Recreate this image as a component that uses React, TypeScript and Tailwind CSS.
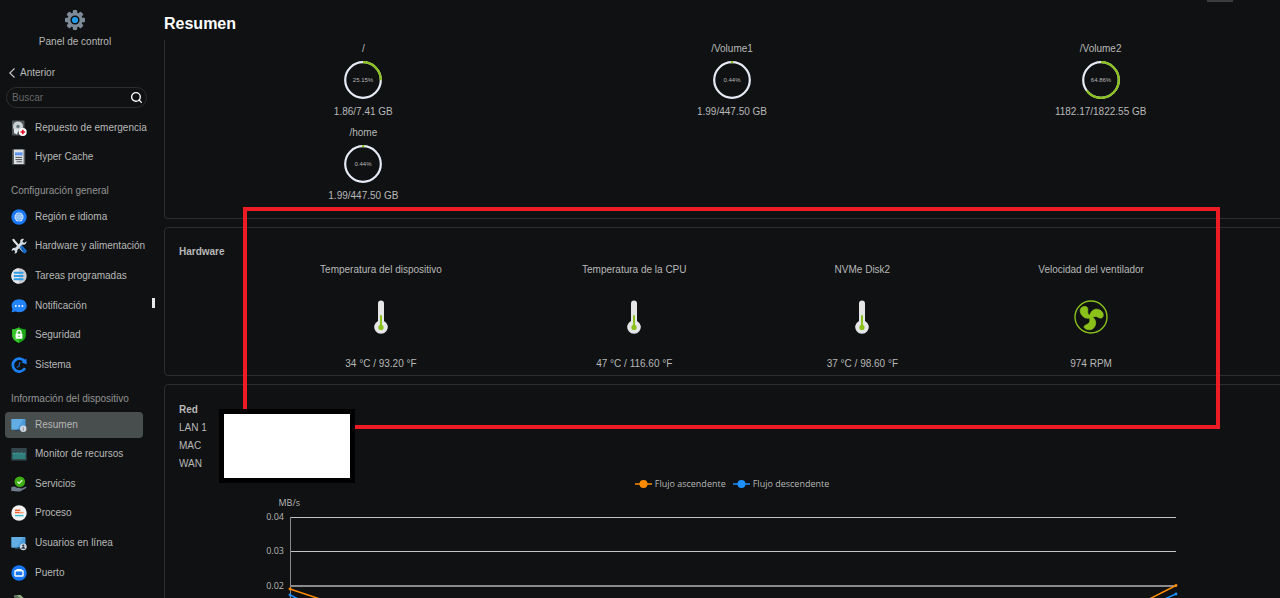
import { useState } from 'react';
import type { ReactNode } from 'react';
import { Search } from 'lucide-react';

type Item = { id: string; label?: string; icon: ReactNode };

function Icon({ children }: { children: ReactNode }) {
  return (
    <svg viewBox="0 0 16 16" className="h-4 w-4 shrink-0" aria-hidden="true">
      {children}
    </svg>
  );
}

// monitor shared by "Resumen" and "Usuarios en línea"
function Screen() {
  return (
    <>
      <rect x="0.5" y="2" width="14" height="10.4" rx="0.6" fill="#4a9bd9" />
      <path d="M0.5 2h12L6 12.4H0.5z" fill="#62aee4" />
      <path d="M4 13.6h5" stroke="#29445c" strokeWidth="1" />
    </>
  );
}

const TOP_ITEMS: Item[] = [
  {
    id: 'spare',
    label: 'Repuesto de emergencia',
    icon: (
      <Icon>
        <rect x="1" y="0.5" width="12.5" height="15" rx="1" fill="#55585b" />
        <circle cx="7" cy="6.4" r="5" fill="#c9d3d6" />
        <circle cx="7" cy="6.4" r="1.7" fill="#5d7378" />
        <path d="M3 8.5l4.5 1.5L6 14.5 3 13z" fill="#e3e8ea" />
        <circle cx="11.8" cy="12" r="3.9" fill="#fff" />
        <path d="M11.8 9.7v4.6M9.5 12h4.6" stroke="#e01228" strokeWidth="1.7" />
      </Icon>
    ),
  },
  {
    id: 'cache',
    label: 'Hyper Cache',
    icon: (
      <Icon>
        <rect x="1.2" y="0.2" width="13" height="15.6" rx="0.8" fill="#5b5e60" />
        <rect x="3" y="0.6" width="9.6" height="14.4" fill="#dfe3e6" />
        <rect x="4" y="3.4" width="7.6" height="3" fill="#5b93ee" />
        <path d="M4.5 8.4h6.6M4.5 10.6h6.6M5.5 12.8h5.6" stroke="#4b4f54" strokeWidth="1" />
      </Icon>
    ),
  },
];

const GENERAL_ITEMS: Item[] = [
  {
    id: 'region',
    label: 'Región e idioma',
    icon: (
      <Icon>
        <circle cx="8" cy="8" r="7.7" fill="#1a78fa" />
        <circle cx="8" cy="8" r="4.5" fill="#e8f2ff" />
        <path
          d="M3.5 8h9M4.2 5.8h7.6M4.2 10.2h7.6M8 3.5v9M8 3.5c-3 2.8-3 6.2 0 9M8 3.5c3 2.8 3 6.2 0 9"
          fill="none"
          stroke="#3d8dfb"
          strokeWidth="0.6"
        />
      </Icon>
    ),
  },
  {
    id: 'hardware',
    label: 'Hardware y alimentación',
    icon: (
      <Icon>
        <path d="M1 1.5l2-.8 1.2 1.8L13 12.500 11.5 14 2.6 4z" fill="#dfe5e9" />
        <path
          d="M15.4 3.2l-2.3 1.7-1.7-1.5L13 .9c-2.4-.7-4.5 1.2-3.7 3.500L4 9.900c-1.8-.6-3.700 1-3.300 3l2-.9 1.500 1.300-.7 2.200c2 .2 3.300-1.500 2.700-3.300l5.300-5.700c2.300.8 4.400-1 3.900-3.300z"
          fill="#d3dce2"
        />
        <path d="M8.6 9.2l2.2-2 4.7 5c.9 1.800-1.200 3.800-2.900 2.700z" fill="#1c6fd0" />
        <path d="M10.800 10l3 3.400" stroke="#0b3f86" strokeWidth="0.8" />
      </Icon>
    ),
  },
  {
    id: 'tasks',
    label: 'Tareas programadas',
    icon: (
      <Icon>
        <circle cx="8" cy="8" r="7.7" fill="#c8ccd2" />
        <path d="M8 .3a7.7 7.7 0 0 0 0 15.4z" fill="#e5e7ea" />
        <path d="M3.6 4.7h8M3.600 8h8M3.600 11.3h8" stroke="#2d9ae6" strokeWidth="2" strokeLinecap="round" />
      </Icon>
    ),
  },
  {
    id: 'notification',
    label: 'Notificación',
    icon: (
      <Icon>
        <path
          d="M8.2 1.300c4.200 0 7.500 2.800 7.500 6.400s-3.300 6.500-7.500 6.500c-1.300 0-2.500-.2-3.500-.7L.5 14.300l1-3C.9 10.200.6 9 .6 7.700c0-3.600 3.300-6.400 7.600-6.400z"
          fill="#2283fb"
        />
        <circle cx="4.8" cy="8" r="0.9" fill="#fff" />
        <circle cx="8.1" cy="8" r="0.9" fill="#fff" />
        <circle cx="11.4" cy="8" r="0.9" fill="#fff" />
      </Icon>
    ),
  },
  {
    id: 'security',
    label: 'Seguridad',
    icon: (
      <Icon>
        <path d="M8 .2c2 1.500 4.200 2.100 6.800 2.100v6c0 3.800-3 6-6.800 7.600C4.200 14.300 1.200 12.100 1.200 8.300v-6C3.800 2.300 6 1.700 8 .2z" fill="#19a516" />
        <path d="M8 .2v15.700C4.200 14.300 1.200 12.100 1.200 8.300v-6C3.800 2.300 6 1.700 8 .2z" fill="#38c42b" />
        <rect x="4.6" y="6.8" width="6.8" height="5" rx="0.5" fill="#fff" />
        <path d="M6 7V5.5a2 2 0 0 1 4 0V7" fill="none" stroke="#fff" strokeWidth="1.3" />
        <circle cx="8" cy="9.2" r="0.7" fill="#23a51d" />
      </Icon>
    ),
  },
  {
    id: 'system',
    label: 'Sistema',
    icon: (
      <Icon>
        <path d="M14 5A6.5 6.5 0 1 0 14 11.2" fill="none" stroke="#1c80f5" strokeWidth="2.7" />
        <path d="M15.4 1.600l.3 5.600-5.200-1.700z" fill="#1c80f5" />
        <path d="M8.8 5.200L8.2 9l-2.400 1.500" fill="none" stroke="#1a5fb8" strokeWidth="1.3" />
      </Icon>
    ),
  },
];

const DEVICE_ITEMS: Item[] = [
  {
    id: 'summary',
    label: 'Resumen',
    icon: (
      <Icon>
        <Screen />
        <circle cx="12.3" cy="11.8" r="3.2" fill="#cfd6de" />
        <path d="M12.300 11.300v2.300M12.300 9.800v.8" stroke="#7b8794" strokeWidth="1" />
      </Icon>
    ),
  },
  {
    id: 'monitor',
    label: 'Monitor de recursos',
    icon: (
      <Icon>
        <rect x="0.3" y="2" width="15.4" height="12.6" fill="#33474d" />
        <path d="M1.500 7.800l1.500-1 1.500.8 2-.8 2 .8 2-1 1.500 1.400 2.500-.8v5.800h-13z" fill="#2f7f7c" />
        <path d="M1.500 7.800l1.500-1 1.500.8 2-.8 2 .8 2-1 1.500 1.400 2.500-.8" fill="none" stroke="#45aaa2" strokeWidth="0.8" />
      </Icon>
    ),
  },
  {
    id: 'services',
    label: 'Servicios',
    icon: (
      <Icon>
        <circle cx="8.8" cy="5.7" r="5.3" fill="#3fae14" />
        <path d="M6.400 5.800l1.800 1.700 3-3.400" fill="none" stroke="#e9ffe0" strokeWidth="1.2" />
        <path d="M.3 11.200c2.300-1.200 3.700-.6 5.500.5h3.500c.7.200.6 1.100 0 1.200l4.800-2c1.200-.4 1.800.6 1 1.200l-5.600 3.200c-2.200.7-5-.3-9.200-.4z" fill="#6f7e8c" />
      </Icon>
    ),
  },
  {
    id: 'process',
    label: 'Proceso',
    icon: (
      <Icon>
        <circle cx="8" cy="8" r="7.7" fill="#f3f3f3" />
        <path d="M4 5.200h5.400M4 7.600h4" stroke="#f2622e" strokeWidth="1.5" />
        <path d="M8 7.600h4.500" stroke="#f79a72" strokeWidth="1.5" />
        <path d="M4 10.600h8.500" stroke="#35bccb" strokeWidth="1.4" />
      </Icon>
    ),
  },
  {
    id: 'users',
    label: 'Usuarios en línea',
    icon: (
      <Icon>
        <Screen />
        <circle cx="12.3" cy="11.8" r="3.4" fill="#cfd6de" />
        <circle cx="12.3" cy="10.7" r="1.1" fill="#263648" />
        <path d="M10.300 13.700c.2-2.200 3.800-2.200 4 0z" fill="#263648" />
      </Icon>
    ),
  },
  {
    id: 'port',
    label: 'Puerto',
    icon: (
      <Icon>
        <circle cx="8" cy="8" r="7.7" fill="#1877f2" />
        <path d="M6 5.600V4.500h4v1.100" fill="none" stroke="#fff" strokeWidth="1.2" />
        <rect x="4" y="5.8" width="8" height="5.2" rx="0.6" fill="none" stroke="#fff" strokeWidth="1.4" />
      </Icon>
    ),
  },
  {
    id: 'log',
    icon: (
      <Icon>
        <path d="M3 1h6.500L13 4.500V15H3z" fill="#5c6b58" />
        <path d="M5.500 1h4L13 4.500 11 6z" fill="#8fae7c" />
      </Icon>
    ),
  },
];

const VOLUMES = [
  { name: '/', percent: 25.15, usage: '1.86/7.41 GB' },
  { name: '/Volume1', percent: 0.44, usage: '1.99/447.50 GB' },
  { name: '/Volume2', percent: 64.86, usage: '1182.17/1822.55 GB' },
  { name: '/home', percent: 0.44, usage: '1.99/447.50 GB' },
];

const SENSORS = [
  { name: 'Temperatura del dispositivo', value: '34 °C / 93.20 °F', fan: false },
  { name: 'Temperatura de la CPU', value: '47 °C / 116.60 °F', fan: false },
  { name: 'NVMe Disk2', value: '37 °C / 98.60 °F', fan: false },
  { name: 'Velocidad del ventilador', value: '974 RPM', fan: true },
];

function Gear() {
  return (
    <svg viewBox="0 0 20 20" className="h-5 w-5" aria-hidden="true">
      <g fill="#7d8b99">
        <rect x="7.8" y="0" width="4.4" height="20" rx="1" />
        <rect x="7.8" y="0" width="4.4" height="20" rx="1" transform="rotate(45 10 10)" />
        <rect x="7.8" y="0" width="4.4" height="20" rx="1" transform="rotate(90 10 10)" />
        <rect x="7.8" y="0" width="4.4" height="20" rx="1" transform="rotate(135 10 10)" />
        <circle cx="10" cy="10" r="7.6" />
      </g>
      <circle cx="10" cy="10" r="4.6" fill="#0f1112" />
      <circle cx="10" cy="10" r="3.1" fill="#1f9be6" />
    </svg>
  );
}

function Ring({ percent }: { percent: number }) {
  // keep a visible tick for nearly empty volumes
  const shown = Math.max(percent, 2);
  return (
    <svg viewBox="0 0 38 38" className="mt-1 mb-[5px] h-[38px] w-[38px]">
      <circle cx="19" cy="19" r="17.8" fill="none" stroke="#e6eaf5" strokeWidth="2.2" />
      <circle
        cx="19"
        cy="19"
        r="17.8"
        fill="none"
        stroke="#8ac21a"
        strokeWidth="2.2"
        pathLength="100"
        strokeDasharray={`${shown} 100`}
        transform={percent < 2 ? 'rotate(-93 19 19)' : 'rotate(-90 19 19)'}
      />
      <text x="19" y="21" textAnchor="middle" className="fill-[#b8b8b8] text-[6px]">
        {percent.toFixed(2)}%
      </text>
    </svg>
  );
}

function Thermometer() {
  return (
    <svg viewBox="0 0 34 34" className="h-[34px] w-[34px]" aria-hidden="true">
      <path d="M14 3.500a3 3 0 0 1 6 0v17.400a6.800 6.800 0 1 1-6 0z" fill="#e6e6e6" />
      <path d="M17 16v11" stroke="#8ac21a" strokeWidth="2" strokeLinecap="round" />
      <circle cx="17" cy="27.4" r="2.6" fill="#8ac21a" />
    </svg>
  );
}

function Fan() {
  return (
    <svg viewBox="0 0 34 34" className="h-[34px] w-[34px]" fill="#8ac21a" aria-hidden="true">
      <circle cx="17" cy="17" r="16" fill="none" stroke="#8ac21a" strokeWidth="1.4" />
      <g stroke="#8ac21a" strokeWidth="0.8" strokeLinejoin="round">
        <path d="M16.400 17.800C11.500 19.700 6.200 15.500 6.200 10.500 6.200 7 10.500 5.500 13 7.200c1.600 1.400.2 4 .9 6 .4 1.500 1.400 2.200 2.600 2.600z" />
        <path d="M15.900 15.300c1-5.200 5.700-7.600 10-5.200 3.600 2 4.200 6 2.200 7.600-1.900 1.300-3.900-.8-5.900-1.200-1.600-.3-3 .2-4 1z" />
        <path d="M18 16.600c4.300 2.700 4.900 8.500 1.200 11.800-2.700 2.200-8 1.600-9.100-1.100-.5-2.200 3-2.400 4.600-4 1.200-1.200 1.400-3 1.100-4.600z" />
        <circle cx="16.8" cy="16.8" r="2" />
      </g>
    </svg>
  );
}

function Legend({ label, color }: { label: string; color: string }) {
  return (
    <div className="flex items-center gap-[3px]">
      <svg viewBox="0 0 17 10" className="h-[10px] w-[17px]" aria-hidden="true">
        <path d="M0 5h17" stroke={color} strokeWidth="1.5" />
        <circle cx="8.5" cy="5" r="4" fill={color} />
      </svg>
      {label}
    </div>
  );
}

function TrafficChart() {
  return (
    <svg viewBox="0 0 1106 180" className="block w-full">
      <g fill="none" strokeWidth="1">
        <path d="M111 25.500h886M111 59.500h886M111 128.500h886M111 162.500h886" stroke="#c4c4c4" />
        <path d="M111 94h886" stroke="#8a8a8c" strokeWidth="2" />
        <path d="M111.500 25v138" stroke="#8a8a8a" />
      </g>
      <g className="fill-[#b8b8b8] text-[9px]" textAnchor="end">
        <text x="121" y="14">MB/s</text>
        <text x="105" y="28">0.04</text>
        <text x="105" y="62">0.03</text>
        <text x="105" y="97">0.02</text>
      </g>
      <path d="M111 103l40 19 400 20 400-20 46-20" fill="none" stroke="#1e90ff" strokeWidth="1.5" />
      <path d="M111 97l60 20 380 15 370 0 76-38.500" fill="none" stroke="#ff8c00" strokeWidth="1.5" />
      <circle cx="111" cy="97" r="1.4" fill="#ff8c00" />
      <circle cx="997" cy="93.5" r="1.4" fill="#ff8c00" />
      <circle cx="111" cy="103" r="1.4" fill="#1e90ff" />
      <circle cx="997" cy="102" r="1.4" fill="#1e90ff" />
    </svg>
  );
}

export default function App() {
  const [active, setActive] = useState('summary');

  const renderItem = (item: Item) => (
    <li key={item.id}>
      <a
        href="#"
        onClick={() => setActive(item.id)}
        className={`ml-[5px] flex h-[26px] w-[138px] items-center gap-2 rounded pl-[6px] whitespace-nowrap ${
          active === item.id ? 'bg-[#484d4d]' : ''
        }`}
      >
        {item.icon}
        {item.label}
      </a>
    </li>
  );

  return (
    <div className="flex h-screen overflow-hidden bg-[#0f1112] font-['Liberation_Sans',Arial,sans-serif] text-[10px] leading-4 text-[#b8b8b8]">
      {/* sidebar */}
      <aside className="relative w-[164px] shrink-0 pt-[10px] pr-[14px]">
        <div className="flex flex-col items-center gap-1">
          <Gear />
          <span>Panel de control</span>
        </div>
        <button className="mt-[15px] ml-[9px] flex items-center gap-[5px]">
          <svg viewBox="0 0 6 10" className="h-[10px] w-[6px]" aria-hidden="true">
            <path d="M5.500.5L.8 5l4.700 4.500" fill="none" stroke="#c8c8c8" strokeWidth="1.1" />
          </svg>
          Anterior
        </button>
        <div className="mt-[6px] mr-[3px] ml-[6px] flex h-[21px] items-center rounded-full border border-[#2c2e30] pr-[3px] pl-[5px]">
          <input
            type="text"
            aria-label="Buscar"
            placeholder="Buscar"
            className="w-full min-w-0 bg-transparent outline-none placeholder:text-[#66686a]"
          />
          <Search className="h-[13px] w-[13px] shrink-0 text-white" strokeWidth={2.5} />
        </div>
        <ul className="mt-[5px] grid h-[59px] grid-rows-2 items-center">{TOP_ITEMS.map(renderItem)}</ul>
        <h2 className="pt-[11px] pb-[3px] pl-[11px] text-[#949494]">Configuración general</h2>
        <ul className="grid h-[178px] grid-rows-6 items-center">{GENERAL_ITEMS.map(renderItem)}</ul>
        <h2 className="pt-[11px] pb-[3px] pl-[11px] text-[#949494]">Información del dispositivo</h2>
        <ul className="grid h-[207px] grid-rows-7 items-center">{DEVICE_ITEMS.map(renderItem)}</ul>
        <div className="absolute top-[298px] right-[9px] h-[10px] w-[3px] bg-[#e8e8e8]" />
      </aside>

      {/* content, wider than the window so the cards run off the right edge */}
      <main className="relative -mr-5 min-w-0 flex-1">
        <div className="absolute top-0 right-[67px] h-[2px] w-[26px] bg-[#3a3b3d]" />
        <h1 className="flex h-10 items-center pt-2 text-base font-bold text-white">Resumen</h1>

        <section className="grid grid-cols-3 gap-y-[5px] rounded-b border border-t-0 border-[#2c2d2f] px-[14px] pt-px pb-[14px]">
          {VOLUMES.map((v) => (
            <div key={v.name} className="flex flex-col items-center">
              <span>{v.name}</span>
              <Ring percent={v.percent} />
              <span>{v.usage}</span>
            </div>
          ))}
        </section>

        <section className="mt-2 rounded border border-[#2c2d2f] px-[14px] pt-4 pb-[3px]">
          <h2 className="font-bold">Hardware</h2>
          <div className="mt-[2px] flex justify-around px-[71px]">
            {SENSORS.map((s) => (
              <div key={s.name} className="flex flex-col items-center gap-[22px]">
                <span>{s.name}</span>
                {s.fan ? <Fan /> : <Thermometer />}
                <span>{s.value}</span>
              </div>
            ))}
          </div>
        </section>

        <section className="mt-2 rounded border border-[#2c2d2f] px-[14px] pt-4">
          <div className="leading-[18px]">
            <h2 className="font-bold">Red</h2>
            <p>LAN 1</p>
            <p>MAC</p>
            <p>WAN</p>
          </div>
          <div className="font-['Open_Sans',sans-serif] text-[9px]">
            <div className="mt-[3px] flex justify-center gap-[7px] leading-4">
              <Legend label="Flujo ascendente" color="#ff8c00" />
              <Legend label="Flujo descendente" color="#1e90ff" />
            </div>
            <TrafficChart />
          </div>
        </section>

        {/* highlight frame and the covered addresses */}
        <div className="pointer-events-none absolute top-[207px] right-20 left-[79px] h-[222px] border-4 border-[#ed1c24]" />
        <div className="absolute top-[409px] left-[55px] h-[74px] w-[136px] border-[5px] border-black bg-white" />
      </main>
    </div>
  );
}
